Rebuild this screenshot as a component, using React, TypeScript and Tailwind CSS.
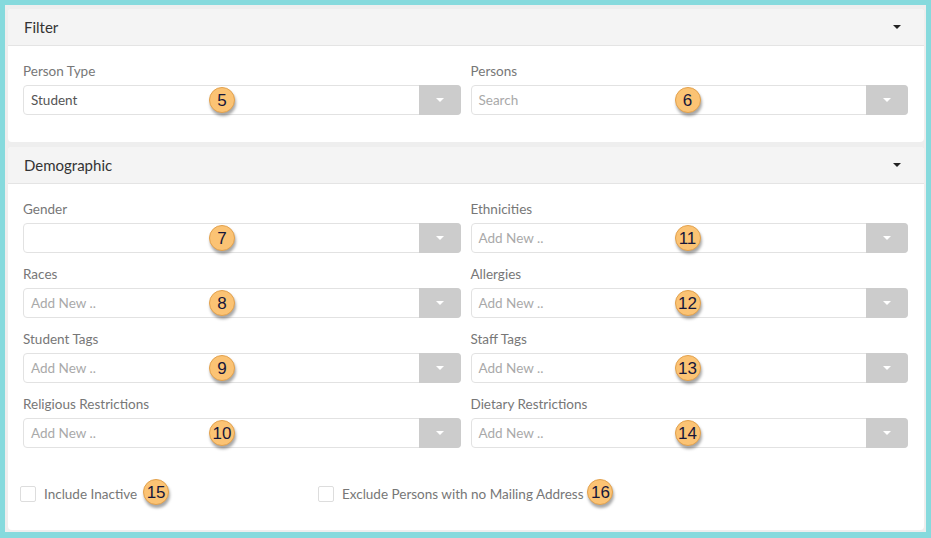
import type { ReactNode } from "react"

const font = { fontFamily: "Lato, 'Open Sans', sans-serif" }

function Badge({ n, className = "" }: { n: number; className?: string }) {
  return (
    <span
      className={`flex h-[26px] w-[26px] items-center justify-center rounded-full border border-[#e3a14c] bg-[#fbc374] text-[17px] leading-none text-[#16163a] shadow-[1px_3px_3px_rgba(0,0,0,0.35)] ${className}`}
      style={{ fontFamily: "'Liberation Sans', Arial, sans-serif" }}
    >
      {n}
    </span>
  )
}

function Caret({ color = "border-t-white" }: { color?: string }) {
  return (
    <span
      className={`h-0 w-0 border-x-[4px] border-t-[4px] border-x-transparent ${color}`}
    />
  )
}

function Select({
  label,
  value,
  placeholder,
  badge,
  badgeLeft,
}: {
  label: string
  value?: string
  placeholder?: string
  badge: number
  badgeLeft: string
}) {
  return (
    <div className="flex flex-col">
      <div className="mb-[6px] h-[16px] text-[13.5px] leading-[16px] text-[#777]">{label}</div>
      <div className="relative flex h-[30px] rounded-[4px] border border-[#e2e2e2] bg-white">
        <div className="flex flex-1 items-center px-[7px] text-[13.5px]">
          {value ? (
            <span className="text-[#555]">{value}</span>
          ) : (
            <span className="text-[#a9a9a9]">{placeholder}</span>
          )}
        </div>
        <div className="-my-px -mr-px flex w-[42px] items-center justify-center rounded-r-[4px] bg-[#cccccc]">
          <Caret />
        </div>
        <Badge n={badge} className={`absolute top-[1px] ${badgeLeft}`} />
      </div>
    </div>
  )
}

function Card({ title, children, className = "" }: { title: string; children: ReactNode; className?: string }) {
  return (
    <div className={`overflow-hidden rounded-[4px] bg-white ${className}`}>
      <div className="flex h-[37px] items-center justify-between border-b border-[#e4e4e4] bg-[#f4f4f4] pl-[16px] pr-[23px]">
        <span className="text-[15px] text-[#333]">{title}</span>
        <Caret color="border-t-[#222]" />
      </div>
      {children}
    </div>
  )
}

function Check({ label, badge, gap }: { label: string; badge: number; gap: string }) {
  return (
    <div className="flex items-center">
      <span className="h-[16px] w-[16px] rounded-[2px] border border-[#dddddd] bg-white" />
      <span className="ml-[8px] text-[13.5px] text-[#777]">{label}</span>
      <Badge n={badge} className={`-mt-[4px] ${gap}`} />
    </div>
  )
}

export default function App() {
  return (
    <div className="h-[538px] w-[931px] bg-[#86dadd] px-[5px] pb-[6px] pt-[5px]" style={font}>
      <div className="flex h-full flex-col gap-[5px] bg-[#eeeeee] pb-[2px] pl-[3px] pr-[2px] pt-[4px]">
        <Card title="Filter" className="h-[133px]">
          <div className="grid grid-cols-2 gap-x-[10px] pl-[15px] pr-[16px] pt-[17px]">
            <Select label="Person Type" value="Student" badge={5} badgeLeft="left-[185px]" />
            <Select label="Persons" placeholder="Search" badge={6} badgeLeft="left-[203px]" />
          </div>
        </Card>

        <Card title="Demographic" className="flex-1">
          <div className="grid grid-cols-2 gap-x-[10px] gap-y-[13px] pl-[15px] pr-[16px] pt-[17px]">
            <Select label="Gender" badge={7} badgeLeft="left-[185px]" />
            <Select label="Ethnicities" placeholder="Add New .." badge={11} badgeLeft="left-[203px]" />
            <Select label="Races" placeholder="Add New .." badge={8} badgeLeft="left-[185px]" />
            <Select label="Allergies" placeholder="Add New .." badge={12} badgeLeft="left-[203px]" />
            <Select label="Student Tags" placeholder="Add New .." badge={9} badgeLeft="left-[185px]" />
            <Select label="Staff Tags" placeholder="Add New .." badge={13} badgeLeft="left-[203px]" />
            <Select label="Religious Restrictions" placeholder="Add New .." badge={10} badgeLeft="left-[185px]" />
            <Select label="Dietary Restrictions" placeholder="Add New .." badge={14} badgeLeft="left-[203px]" />
          </div>
          <div className="mt-[35px] flex items-center pl-[12px]">
            <div className="w-[298px]">
              <Check label="Include Inactive" badge={15} gap="ml-[6px]" />
            </div>
            <Check label="Exclude Persons with no Mailing Address" badge={16} gap="ml-[4px]" />
          </div>
        </Card>
      </div>
    </div>
  )
}
